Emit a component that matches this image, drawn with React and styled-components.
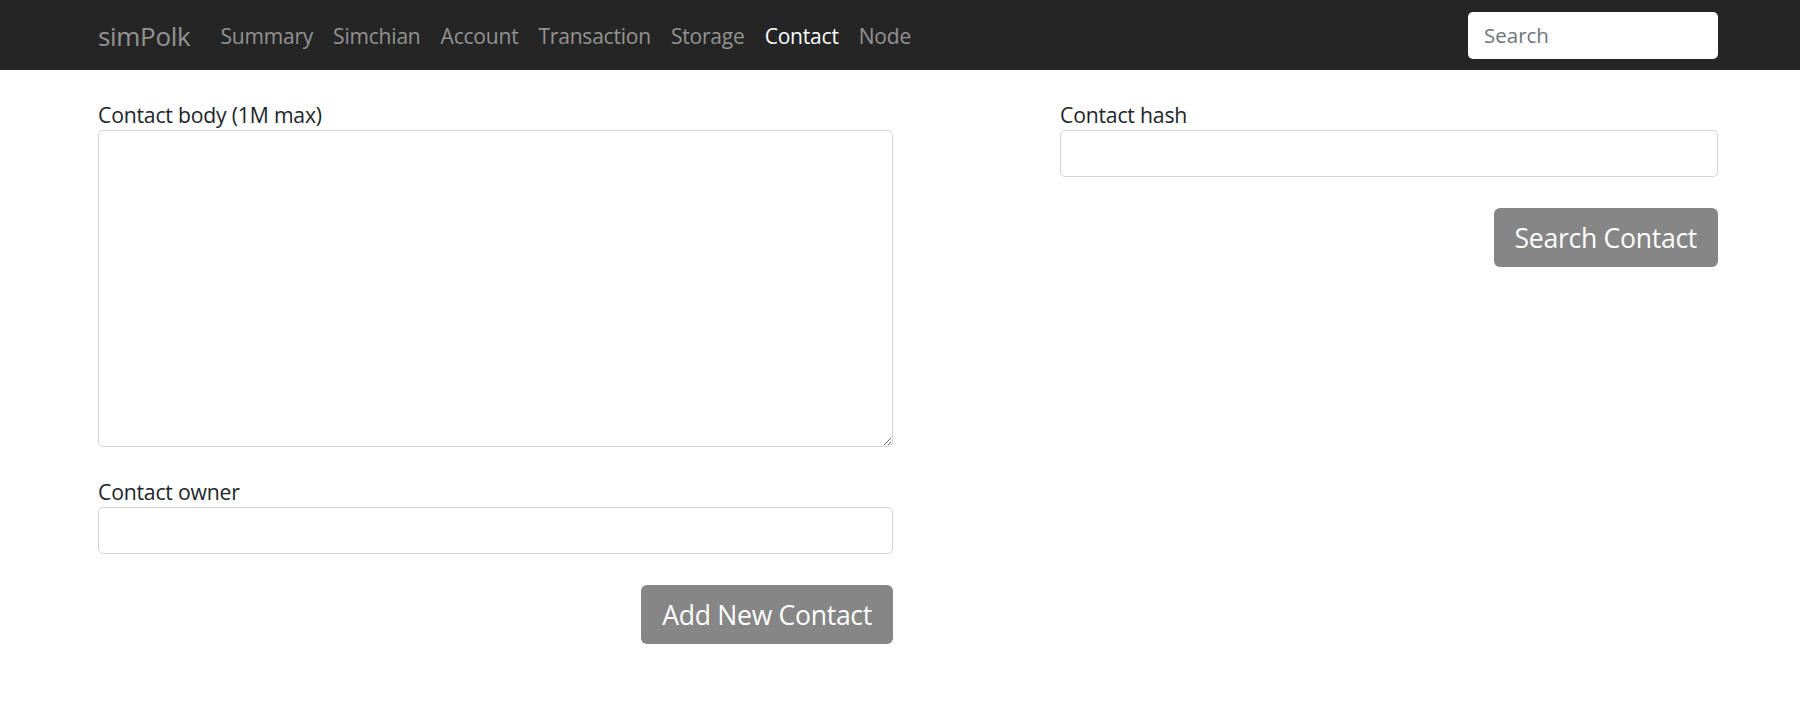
import React, { useState } from "react";
import styled, { createGlobalStyle } from "styled-components";

const GlobalStyle = createGlobalStyle`
  html, body {
    margin: 0;
    padding: 0;
    background: #fff;
  }
  body {
    font-family: "Open Sans", "Noto Sans", sans-serif;
    color: #212529;
  }
  * {
    box-sizing: border-box;
  }
`;

const links = ["Summary", "Simchian", "Account", "Transaction", "Storage", "Contact", "Node"];

const App = () => {
  const [active, setActive] = useState("Contact");
  const [body, setBody] = useState("");
  const [owner, setOwner] = useState("");
  const [hash, setHash] = useState("");

  return (
    <>
      <GlobalStyle />
      <NavBar>
        <NavInner>
          <Brand href="#">simPolk</Brand>
          <NavList>
            {links.map((l) => (
              <NavLink key={l} href="#" $active={l === active} onClick={() => setActive(l)}>
                {l}
              </NavLink>
            ))}
          </NavList>
          <SearchBox type="text" placeholder="Search" />
        </NavInner>
      </NavBar>
      <Main>
        <LeftCol>
          <FormGroup>
            <Label>Contact body (1M max)</Label>
            <TextArea value={body} onChange={(e) => setBody(e.target.value)} />
          </FormGroup>
          <FormGroup>
            <Label>Contact owner</Label>
            <Input value={owner} onChange={(e) => setOwner(e.target.value)} />
          </FormGroup>
          <ButtonRow>
            <Button>Add New Contact</Button>
          </ButtonRow>
        </LeftCol>
        <RightCol>
          <FormGroup>
            <Label>Contact hash</Label>
            <Input value={hash} onChange={(e) => setHash(e.target.value)} />
          </FormGroup>
          <ButtonRow>
            <Button>Search Contact</Button>
          </ButtonRow>
        </RightCol>
      </Main>
    </>
  );
};

const NavBar = styled.nav`
  background: #252525;
  height: 70px;
`;

const NavInner = styled.div`
  display: flex;
  align-items: center;
  height: 100%;
  width: 1620px;
  margin-left: 98px;
  padding-top: 2px;
`;

const Brand = styled.a`
  font-size: 26px;
  color: rgba(255, 255, 255, 0.5);
  text-decoration: none;
  margin-right: 30px;
  letter-spacing: -0.3px;
`;

const NavList = styled.div`
  display: flex;
  gap: 20px;
`;

const NavLink = styled.a`
  font-size: 21px;
  color: ${({ $active }) => ($active ? "#fff" : "rgba(255, 255, 255, 0.5)")};
  text-decoration: none;
  letter-spacing: -0.2px;
`;

const SearchBox = styled.input`
  margin-left: auto;
  margin-top: -2px;
  width: 250px;
  height: 47px;
  border: none;
  border-radius: 5px;
  padding: 0 16px;
  font-family: inherit;
  font-size: 20.5px;
  outline: none;
  &::placeholder {
    color: #6c757d;
  }
`;

const Main = styled.main`
  display: flex;
  gap: 167px;
  width: 1620px;
  margin-left: 98px;
  padding-top: 32px;
`;

const LeftCol = styled.div`
  width: 795px;
  display: flex;
  flex-direction: column;
`;

const RightCol = styled.div`
  width: 658px;
  display: flex;
  flex-direction: column;
`;

const FormGroup = styled.div`
  display: flex;
  flex-direction: column;
  margin-bottom: 32px;
`;

const Label = styled.label`
  font-size: 21.2px;
  line-height: 26px;
  margin-bottom: 2px;
  color: #212529;
  letter-spacing: -0.2px;
`;

const fieldStyles = `
  width: 100%;
  border: 1px solid #d3d3d3;
  border-radius: 5px;
  font-family: inherit;
  font-size: 20.5px;
  padding: 8px 14px;
  outline: none;
  background: #fff;
`;

const TextArea = styled.textarea`
  ${fieldStyles}
  height: 317px;
  resize: vertical;
`;

const Input = styled.input`
  ${fieldStyles}
  height: 47px;
`;

const ButtonRow = styled.div`
  display: flex;
  justify-content: flex-end;
  margin-top: -1px;
`;

const Button = styled.button`
  background: #868686;
  color: #fff;
  border: none;
  border-radius: 6px;
  font-family: inherit;
  font-size: 26.6px;
  height: 59px;
  padding: 0 21px;
  cursor: pointer;
  letter-spacing: -0.3px;
`;

export default App;
